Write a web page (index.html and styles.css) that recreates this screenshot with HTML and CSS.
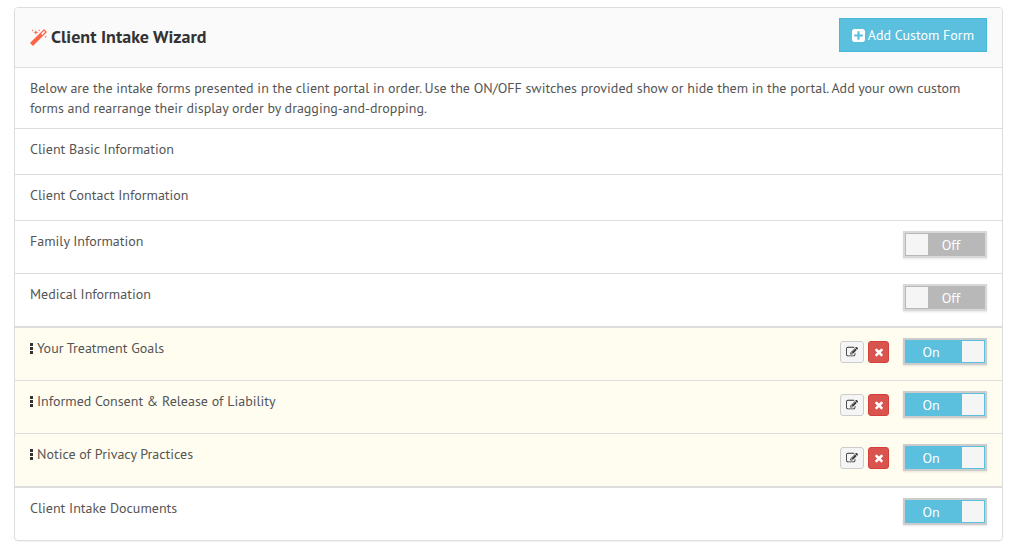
FILE: index.html
```
<!DOCTYPE html>
<html lang="en">
<head>
    <meta charset="UTF-8">
    <meta name="viewport" content="width=device-width, initial-scale=1.0">
    <title>Client Intake Wizard</title>
    <link rel="stylesheet" href="styles.css">
</head>
<body>
    <!-- Shared icons -->
    <svg class="icon-defs" aria-hidden="true">
        <symbol id="icon-edit" viewBox="0 0 1792 1792">
            <path d="M888 1184l116-116-152-152-116 116v56h96v96h56zm440-720q-16-16-33 1l-350 350q-17 17-1 33t33-1l350-350q17-17 1-33zm80 594v190q0 119-84.5 203.5t-203.5 84.5h-832q-119 0-203.5-84.5t-84.5-203.5v-832q0-119 84.5-203.5t203.5-84.5h832q63 0 117 25 15 7 18 23 3 17-9 29l-49 49q-14 14-32 8-23-6-45-6h-832q-66 0-113 47t-47 113v832q0 66 47 113t113 47h832q66 0 113-47t47-113v-126q0-13 9-22l64-64q15-15 35-7t20 29zm-96-738l288 288-672 672h-288v-288zm444 132l-92 92-288-288 92-92q28-28 68-28t68 28l152 152q28 28 28 68t-28 68z"/>
        </symbol>
        <symbol id="icon-remove" viewBox="0 0 1792 1792">
            <path d="M1490 1322q0 40-28 68l-136 136q-28 28-68 28t-68-28l-294-294-294 294q-28 28-68 28t-68-28l-136-136q-28-28-28-68t28-68l294-294-294-294q-28-28-28-68t28-68l136-136q28-28 68-28t68 28l294 294 294-294q28-28 68-28t68 28l136 136q28 28 28 68t-28 68l-294 294 294 294q28 28 28 68z"/>
        </symbol>
        <symbol id="icon-grip" viewBox="0 0 3 11">
            <path d="M0 0h3v3H0zM0 4h3v3H0zM0 8h3v3H0z"/>
        </symbol>
    </svg>

    <section class="panel">
        <header class="panel-heading">
            <h1 class="panel-title">
                <svg class="icon-magic" viewBox="0 0 1664 1664" aria-hidden="true">
                    <path d="M1190 581l293-293-107-107-293 293zm447-293q0 27-18 45l-1286 1286q-18 18-45 18t-45-18l-198-198q-18-18-18-45t18-45l1286-1286q18-18 45-18t45 18l198 198q18 18 18 45zm-1351-190l98 30-98 30-30 98-30-98-98-30 98-30 30-98zm350 162l196 60-196 60-60 196-60-196-196-60 196-60 60-196zm930 478l98 30-98 30-30 98-30-98-98-30 98-30 30-98zm-640-640l98 30-98 30-30 98-30-98-98-30 98-30 30-98z"/>
                </svg>
                Client Intake Wizard
            </h1>
            <button type="button" class="btn btn-add">
                <svg class="icon-plus" viewBox="128 128 1536 1536" aria-hidden="true">
                    <path d="M1408 960v-128q0-26-19-45t-45-19h-320v-320q0-26-19-45t-45-19h-128q-26 0-45 19t-19 45v320h-320q-26 0-45 19t-19 45v128q0 26 19 45t45 19h320v320q0 26 19 45t45 19h128q26 0 45-19t19-45v-320h320q26 0 45-19t19-45zm256-544v960q0 119-84.5 203.5t-203.5 84.5h-960q-119 0-203.5-84.5t-84.5-203.5v-960q0-119 84.5-203.5t203.5-84.5h960q119 0 203.5 84.5t84.5 203.5z"/>
                </svg>
                Add Custom Form
            </button>
        </header>

        <p class="panel-intro">Below are the intake forms presented in the client portal in order. Use the ON/OFF switches provided show or hide them in the portal. Add your own custom forms and rearrange their display order by dragging-and-dropping.</p>

        <ul class="form-list">
            <li class="form-row"><span class="form-name">Client Basic Information</span></li>
            <li class="form-row"><span class="form-name">Client Contact Information</span></li>
            <li class="form-row">
                <span class="form-name">Family Information</span>
                <label class="switch">
                    <input type="checkbox" aria-label="Family Information">
                    <span class="switch-text">Off</span>
                </label>
            </li>
            <li class="form-row">
                <span class="form-name">Medical Information</span>
                <label class="switch">
                    <input type="checkbox" aria-label="Medical Information">
                    <span class="switch-text">Off</span>
                </label>
            </li>
        </ul>

        <!-- Custom forms, can be dragged -->
        <ul class="form-list form-list-custom">
            <li class="form-row" draggable="true">
                <span class="form-name"><svg class="icon-grip" aria-hidden="true"><use href="#icon-grip"/></svg>Your Treatment Goals</span>
                <div class="row-actions">
                    <button type="button" class="btn btn-edit" aria-label="Edit"><svg class="icon-small" aria-hidden="true"><use href="#icon-edit"/></svg></button>
                    <button type="button" class="btn btn-remove" aria-label="Remove"><svg class="icon-small" aria-hidden="true"><use href="#icon-remove"/></svg></button>
                </div>
                <label class="switch">
                    <input type="checkbox" aria-label="Your Treatment Goals" checked>
                    <span class="switch-text">On</span>
                </label>
            </li>
            <li class="form-row" draggable="true">
                <span class="form-name"><svg class="icon-grip" aria-hidden="true"><use href="#icon-grip"/></svg>Informed Consent &amp; Release of Liability</span>
                <div class="row-actions">
                    <button type="button" class="btn btn-edit" aria-label="Edit"><svg class="icon-small" aria-hidden="true"><use href="#icon-edit"/></svg></button>
                    <button type="button" class="btn btn-remove" aria-label="Remove"><svg class="icon-small" aria-hidden="true"><use href="#icon-remove"/></svg></button>
                </div>
                <label class="switch">
                    <input type="checkbox" aria-label="Informed Consent &amp; Release of Liability" checked>
                    <span class="switch-text">On</span>
                </label>
            </li>
            <li class="form-row" draggable="true">
                <span class="form-name"><svg class="icon-grip" aria-hidden="true"><use href="#icon-grip"/></svg>Notice of Privacy Practices</span>
                <div class="row-actions">
                    <button type="button" class="btn btn-edit" aria-label="Edit"><svg class="icon-small" aria-hidden="true"><use href="#icon-edit"/></svg></button>
                    <button type="button" class="btn btn-remove" aria-label="Remove"><svg class="icon-small" aria-hidden="true"><use href="#icon-remove"/></svg></button>
                </div>
                <label class="switch">
                    <input type="checkbox" aria-label="Notice of Privacy Practices" checked>
                    <span class="switch-text">On</span>
                </label>
            </li>
        </ul>

        <ul class="form-list">
            <li class="form-row">
                <span class="form-name">Client Intake Documents</span>
                <label class="switch">
                    <input type="checkbox" aria-label="Client Intake Documents" checked>
                    <span class="switch-text">On</span>
                </label>
            </li>
        </ul>
    </section>

    <script>
        document.querySelectorAll('.switch input').forEach(input => {
            input.addEventListener('change', () => {
                input.nextElementSibling.textContent = input.checked ? 'On' : 'Off';
            });
        });
    </script>
</body>
</html>
```
FILE: styles.css
```
* {
    box-sizing: border-box;
}
body {
    margin: 0;
    padding: 7px 15px 12px 14px;
    background-color: #fff;
    color: #555;
    font-family: "PT Sans", "Open Sans", sans-serif;
    font-size: 14px;
    line-height: 20px;
}
svg {
    fill: currentColor;
}
.icon-defs {
    display: none;
}
.panel {
    border: 1px solid #ddd;
    border-radius: 4px;
    box-shadow: 0 1px 1px rgba(0, 0, 0, 0.05);
    overflow: hidden;
}
.panel-heading {
    display: flex;
    justify-content: space-between;
    align-items: flex-start;
    padding: 10px 15px 15px;
    background-color: #fafafa;
    border-bottom: 1px solid #ddd;
}
.panel-title {
    display: flex;
    align-items: center;
    gap: 4px;
    margin: 9px 0 0;
    color: #333;
    font-size: 18px;
    font-weight: bold;
    line-height: 20px;
}
.icon-magic {
    width: 17px;
    height: 17px;
    color: #ff6347;
}
.btn {
    display: flex;
    justify-content: center;
    align-items: center;
    padding: 0;
    border: 1px solid #ccc;
    border-radius: 3px;
    font-family: inherit;
    font-size: 14px;
    cursor: pointer;
}
.btn-add {
    gap: 3px;
    height: 34px;
    padding: 0 12px;
    background-color: #5bc0de;
    border-color: #46b8da;
    border-radius: 0;
    color: #fff;
}
.icon-plus {
    width: 13px;
    height: 13px;
}
.panel-intro {
    margin: 0;
    padding: 10px 15px;
}
.form-list {
    margin: 0;
    padding: 0;
    list-style: none;
}
.form-row {
    display: flex;
    align-items: flex-start;
    padding: 10px 15px 15px;
    border-top: 1px solid #ddd;
}
.form-name {
    display: flex;
    flex: 1;
    align-items: center;
    gap: 4px;
}
.icon-grip {
    width: 3px;
    height: 11px;
    color: #333;
}
.form-list-custom {
    background-color: #fffdf0;
    border-top: 1px solid #ddd;
    border-bottom: 1px solid #ddd;
}
.row-actions {
    display: flex;
    gap: 4px;
    margin-right: 14px;
    padding-top: 3px;
}
.icon-small {
    width: 12px;
    height: 12px;
}
.btn-edit {
    width: 24px;
    height: 22px;
    background-color: #f5f5f5;
    color: #333;
}
.btn-remove {
    width: 21px;
    height: 22px;
    background-color: #d9534f;
    border-color: #d43f3a;
    color: #fff;
}
.switch {
    display: flex;
    position: relative;
    width: 84px;
    height: 27px;
    cursor: pointer;
}
.switch input {
    width: 100%;
    height: 100%;
    margin: 0;
    appearance: none;
    background: linear-gradient(#f5f5f5, #f5f5f5) 1px 1px / 22px 21px no-repeat #b8b8b8;
    border: 2px solid #d8d8d8;
    box-shadow: 0 1px 2px rgba(0, 0, 0, 0.1);
    cursor: pointer;
}
.switch input:checked {
    background-color: #5bc0de;
    background-position: right 1px top 1px;
    border-color: #ccc;
}
/* label sits over the half the knob leaves free */
.switch-text {
    position: absolute;
    top: 4px;
    right: 8px;
    width: 56px;
    color: #fff;
    text-align: center;
    pointer-events: none;
}
.switch input:checked + .switch-text {
    right: auto;
    left: 0;
}
```
